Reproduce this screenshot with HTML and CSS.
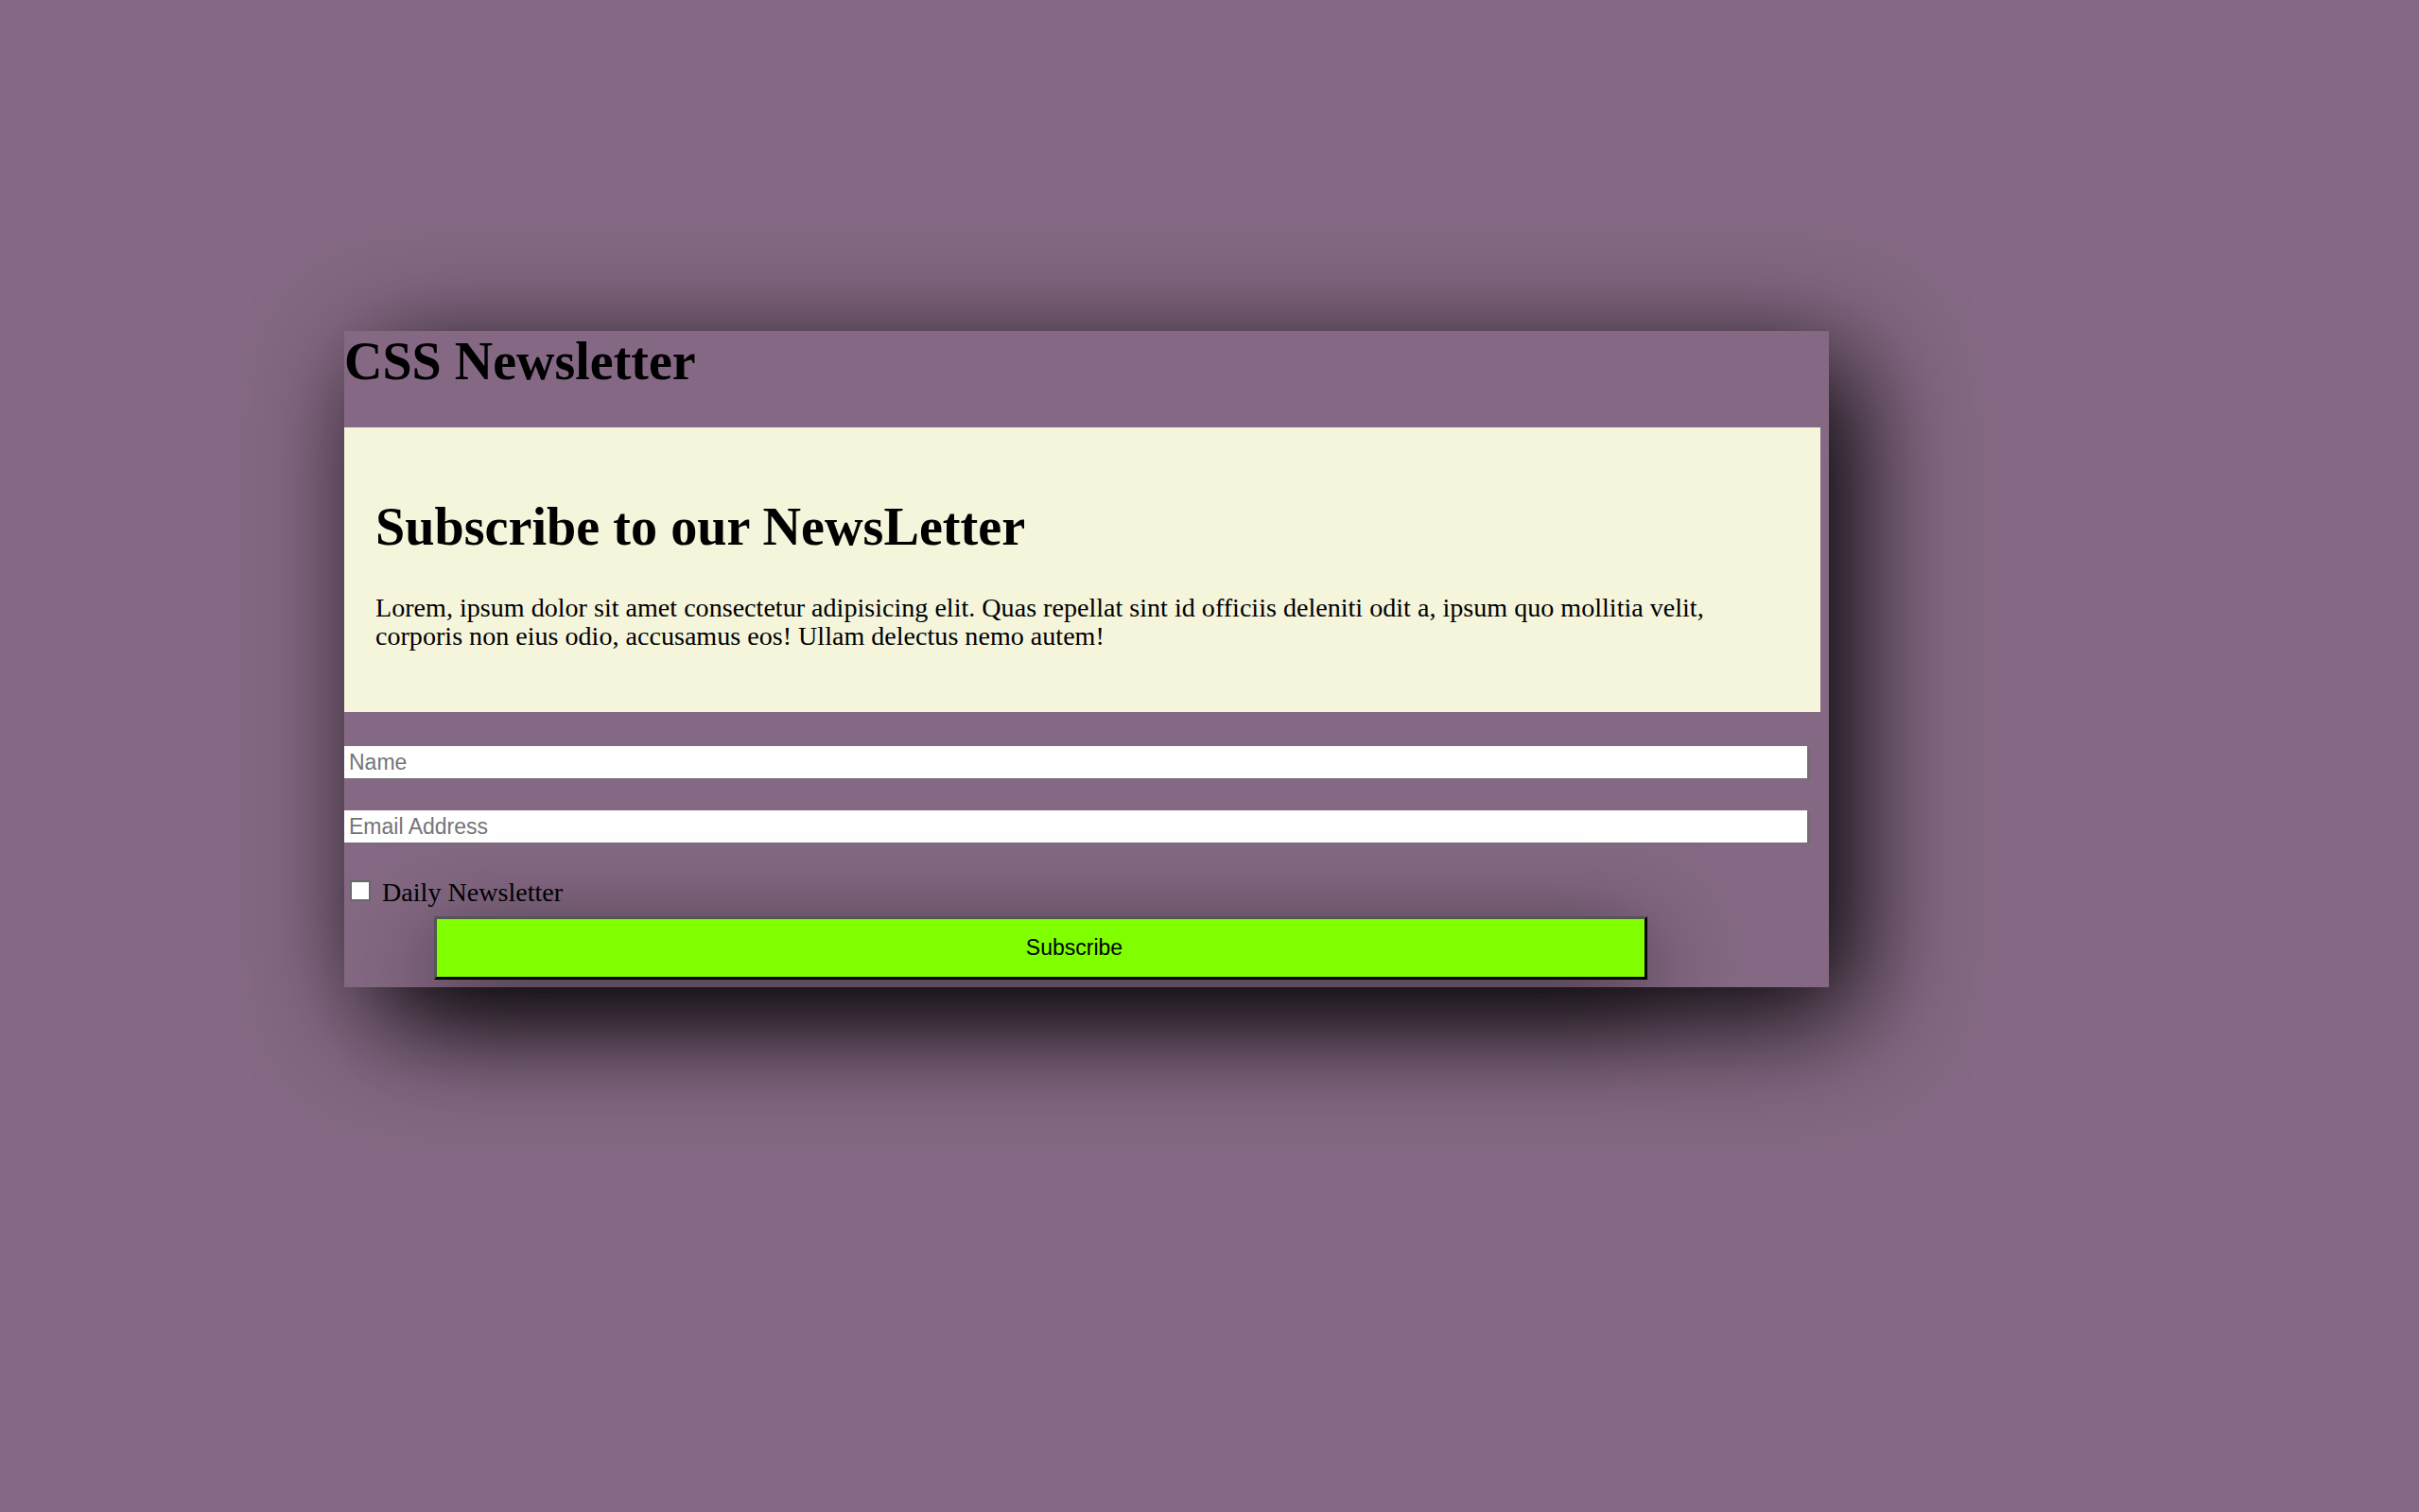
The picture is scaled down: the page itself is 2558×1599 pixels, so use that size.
FILE: index.html
```html
<!DOCTYPE html>
<html lang="en">
<head>
<meta charset="utf-8">
<title>CSS Newsletter</title>
<link rel="stylesheet" href="styles.css">
</head>
<body>
  <main class="card">
    <h1 class="title">CSS Newsletter</h1>
    <section class="intro">
      <h2 class="intro-heading">Subscribe to our NewsLetter</h2>
      <p class="intro-text">Lorem, ipsum dolor sit amet consectetur adipisicing elit. Quas repellat sint id officiis deleniti odit a, ipsum quo mollitia velit, corporis non eius odio, accusamus eos! Ullam delectus nemo autem!</p>
    </section>
    <form class="form">
      <input class="field field-name" type="text" placeholder="Name">
      <input class="field field-email" type="email" placeholder="Email Address">
      <label class="check"><input class="check-box" type="checkbox"> Daily Newsletter</label>
      <button class="subscribe" type="button">Subscribe</button>
    </form>
  </main>
</body>
</html>
```

FILE: styles.css
```css
html, body {
  margin: 0;
}

body {
  min-height: 100vh;
  box-sizing: border-box;
  padding: 350px 0 0 364px;
  background: #856984;
  font-family: "Liberation Serif", "Times New Roman", serif;
  color: #000;
}

.card {
  display: flow-root;
  width: 1570px;
  background: #856984;
  box-shadow: 27px 30px 114px #000;
}

.title {
  margin: 0 0 38px;
  font-size: 56px;
  line-height: 64px;
  font-weight: bold;
}

.intro {
  width: 1561px;
  box-sizing: border-box;
  padding: 33px 40px 33px 33px;
  background: #f5f5dc;
}

.intro-heading {
  margin: 40px 0 38.5px;
  font-size: 56.2px;
  line-height: 64px;
  font-weight: bold;
}

.intro-text {
  margin: 0 0 32.5px;
  font-size: 28.1px;
  line-height: 30px;
}

.form {
  margin: 0;
}

.field {
  display: block;
  width: 1547px;
  height: 34px;
  box-sizing: border-box;
  margin: 36px 0 0;
  padding: 0 0 0 5px;
  border: 0;
  outline: none;
  background: #fff;
  box-shadow: 3px 1px 0 #6f6f6f;
  font-family: "Liberation Sans", Arial, sans-serif;
  font-size: 23px;
  color: #000;
}

.field::placeholder {
  color: #757575;
}

.field-email {
  margin-top: 34px;
}

.check {
  display: block;
  margin-top: 38px;
  font-size: 28.1px;
  line-height: 30px;
}

.check-box {
  -webkit-appearance: none;
  appearance: none;
  display: inline-block;
  vertical-align: baseline;
  width: 22px;
  height: 22px;
  box-sizing: border-box;
  margin: 0 5px 0 6px;
  border: 2px solid #686868;
  background: #fff;
}

.subscribe {
  display: block;
  width: 1283px;
  height: 67px;
  box-sizing: border-box;
  margin: 10px 0 8px 95px;
  padding: 0 0 0 71px;
  border-style: solid;
  border-width: 3px;
  border-color: #555 #000 #000 #555;
  background: #7fff00;
  box-shadow: 0 22px 100px rgba(0, 0, 0, 0.6);
  font-family: "Liberation Sans", Arial, sans-serif;
  font-size: 23px;
  color: #000;
  text-align: center;
  cursor: pointer;
}
```
